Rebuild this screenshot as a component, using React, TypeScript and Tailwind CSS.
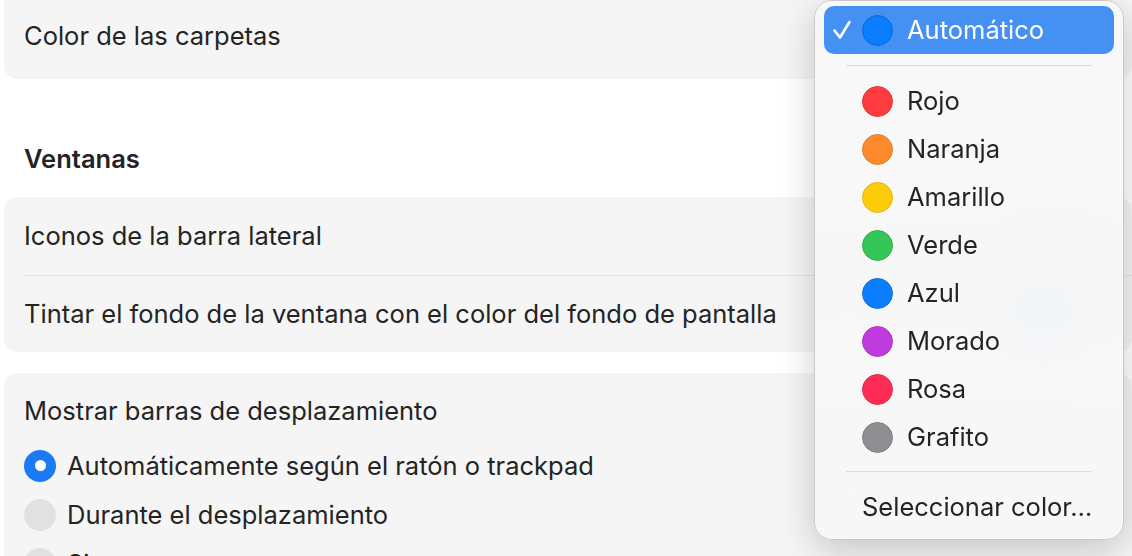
const colors = [
  { name: 'Rojo', fill: '#fe3b3f', ring: '#e0343a' },
  { name: 'Naranja', fill: '#fd8b2d', ring: '#e27b27' },
  { name: 'Amarillo', fill: '#fecb0b', ring: '#e3b40a' },
  { name: 'Verde', fill: '#34c659', ring: '#2eae4f' },
  { name: 'Azul', fill: '#0b7dff', ring: '#0a6fe2' },
  { name: 'Morado', fill: '#c03bdd', ring: '#aa34c4' },
  { name: 'Rosa', fill: '#fe2c55', ring: '#e2274b' },
  { name: 'Grafito', fill: '#8e8e93', ring: '#7f7f84' },
];

function Dot({ fill, ring }: { fill: string; ring: string }) {
  return (
    <span
      className="size-[31px] shrink-0 rounded-full border"
      style={{ backgroundColor: fill, borderColor: ring }}
    />
  );
}

function Radio({ checked, label }: { checked?: boolean; label: string }) {
  return (
    <div className="flex h-[49px] items-center gap-[11px]">
      {checked ? (
        <span className="flex size-[32px] items-center justify-center rounded-full bg-[#1a7bf4]">
          <span className="size-[11px] rounded-full bg-white" />
        </span>
      ) : (
        <span className="size-[32px] rounded-full bg-[#e1e1e1]" />
      )}
      <span>{label}</span>
    </div>
  );
}

function ColorMenu() {
  return (
    <div className="absolute left-[814px] top-0 h-[540px] w-[310px] overflow-hidden rounded-[18px] border border-[#c9c9c9] bg-[rgba(247,247,247,0.9)] pt-[5px] shadow-[0_10px_36px_rgba(0,0,0,0.2)] backdrop-blur-xl">
      <div className="mx-[9px] flex h-[48px] items-center rounded-[10px] bg-[#4590f3] pl-[9px] text-white">
        <svg width="18" height="20" viewBox="0 0 18 20" className="shrink-0">
          <polyline
            points="1.5,10.5 7,17.5 16.5,2"
            fill="none"
            stroke="white"
            strokeWidth="2.6"
            strokeLinecap="round"
            strokeLinejoin="round"
          />
        </svg>
        <span className="ml-[11px] flex">
          <Dot fill="#0b7dff" ring="#0a68d8" />
        </span>
        <span className="ml-[14px]">Automático</span>
      </div>
      <div className="mx-[31px] mt-[11px] h-px bg-[#dcdcdc]" />
      <div className="mt-[11px]">
        {colors.map((c) => (
          <div key={c.name} className="flex h-[48px] items-center pl-[47px]">
            <Dot fill={c.fill} ring={c.ring} />
            <span className="ml-[14px]">{c.name}</span>
          </div>
        ))}
      </div>
      <div className="mx-[31px] mt-[10px] h-px bg-[#dcdcdc]" />
      <div className="mt-[11px] flex h-[48px] items-center pl-[47px]">Seleccionar color…</div>
    </div>
  );
}

export default function App() {
  return (
    <div className="relative h-[556px] w-[1132px] overflow-hidden bg-white font-['Inter','Noto_Sans',sans-serif] text-[25.5px] leading-[30px] text-[#242424]">
      <div className="pl-[4px]">
        <div className="flex h-[79px] items-center rounded-b-[14px] bg-[#f5f5f5] pb-[7px] pl-[20px]">
          Color de las carpetas
        </div>

        <div className="flex h-[118px] items-end pb-[23px] pl-[20px] font-semibold">Ventanas</div>

        <div className="relative rounded-[14px] bg-[#f5f5f5] pl-[20px]">
          <div className="flex h-[78px] items-center">Iconos de la barra lateral</div>
          <div className="h-px bg-[#e4e4e4]" />
          <div className="flex h-[76px] items-center">
            Tintar el fondo de la ventana con el color del fondo de pantalla
          </div>
          <div className="absolute left-[1030px] top-[24px] h-[28px] w-[40px] rounded-full bg-[#d6d6d6]" />
          <div className="absolute left-[1010px] top-[100px] h-[28px] w-[60px] rounded-full bg-[#5a9cf5]" />
        </div>

        <div className="mt-[21px] rounded-t-[14px] bg-[#f5f5f5] pl-[20px] pt-[23px]">
          <div>Mostrar barras de desplazamiento</div>
          <div className="mt-[15px]">
            <Radio checked label="Automáticamente según el ratón o trackpad" />
            <Radio label="Durante el desplazamiento" />
            <Radio label="Siempre" />
          </div>
        </div>
      </div>

      <ColorMenu />
    </div>
  );
}
